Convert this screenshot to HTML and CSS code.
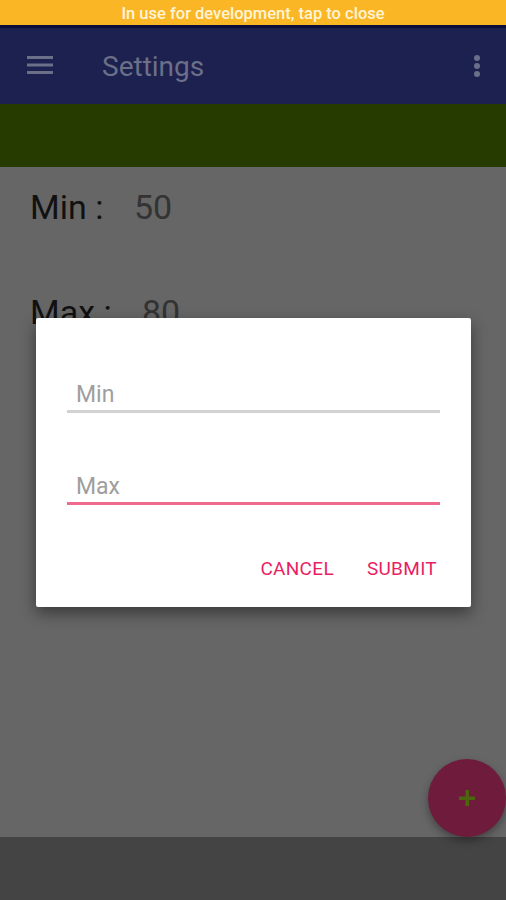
FILE: index.html
```html
<!DOCTYPE html>
<html>
<head>
<meta charset="utf-8">
<link rel="stylesheet" href="styles.css">
</head>
<body>
<div class="screen">
  <div class="status">In use for development, tap to close</div>
  <div class="appbar">
    <svg class="menu" width="26" height="20" viewBox="0 0 26 20"><rect x="0" y="1" width="26" height="3"/><rect x="0" y="8.5" width="26" height="3"/><rect x="0" y="16" width="26" height="3"/></svg>
    <div class="title">Settings</div>
    <svg class="kebab" width="8" height="22" viewBox="0 0 8 22"><circle cx="4" cy="3" r="3"/><circle cx="4" cy="11" r="3"/><circle cx="4" cy="19" r="3"/></svg>
  </div>
  <div class="band"></div>
  <div class="content">
    <div class="row"><span class="label">Min :</span><span class="value">50</span></div>
    <div class="row row-max"><span class="label">Max :</span><span class="value">80</span></div>
    <div class="fab">
      <svg width="18" height="18" viewBox="0 0 18 18"><rect x="7.5" y="1" width="3.5" height="16"/><rect x="1" y="7.5" width="16" height="3.5"/></svg>
    </div>
  </div>
  <div class="navbar"></div>

  <div class="dialog">
    <div class="field"><span class="ph">Min</span></div>
    <div class="field focused"><span class="ph">Max</span></div>
    <div class="actions">
      <span class="btn">CANCEL</span>
      <span class="btn">SUBMIT</span>
    </div>
  </div>
</div>
</body>
</html>
```
FILE: styles.css
```css
html, body {
  margin: 0;
  padding: 0;
}
body {
  font-family: Roboto, "Noto Sans", sans-serif;
}
.screen {
  position: relative;
  width: 506px;
  height: 900px;
  display: flex;
  flex-direction: column;
  overflow: hidden;
  background: #666666;
}
.status {
  height: 25px;
  background: #fbb626;
  color: #fff4d6;
  font-size: 16.5px;
  font-weight: 500;
  line-height: 28px;
  text-align: center;
  border-bottom: 3px solid #0c0f3a;
}
.appbar {
  height: 76px;
  background: #1c2150;
  display: flex;
  align-items: center;
  padding: 0 27px;
}
.menu {
  fill: #6b6f87;
  margin-top: -2px;
}
.title {
  color: #6b6f87;
  font-size: 28px;
  margin-left: 49px;
  flex: 1;
}
.kebab {
  fill: #6b6f87;
  margin-right: -2px;
  margin-top: -1px;
}
.band {
  height: 63px;
  background: #263b00;
}
.content {
  flex: 1;
  background: #666666;
  padding: 20px 0 0 30px;
  position: relative;
}
.row {
  height: 105px;
  font-size: 34px;
  line-height: 40px;
  color: #111;
}
.label {
  display: inline-block;
  width: 104px;
}
.row-max .label {
  width: 112px;
}
.value {
  color: #333;
}
.fab {
  position: absolute;
  left: 428px;
  top: 592px;
  width: 78px;
  height: 78px;
  border-radius: 50%;
  background: #6e1b3c;
  box-shadow: 0 4px 8px rgba(0,0,0,0.35);
  display: flex;
  align-items: center;
  justify-content: center;
}
.fab svg {
  fill: #4c6610;
}
.navbar {
  height: 63px;
  background: #444444;
}
.dialog {
  position: absolute;
  left: 36px;
  top: 318px;
  width: 435px;
  height: 289px;
  background: #ffffff;
  border-radius: 2px;
  box-shadow: 0 6px 16px rgba(0,0,0,0.45);
  box-sizing: border-box;
  padding: 52px 31px 0 31px;
}
.field {
  height: 40px;
  padding-top: 11px;
  padding-left: 9px;
  box-sizing: content-box;
  height: 29px;
  border-bottom: 3px solid #d2d2d2;
  margin-bottom: 49px;
}
.field.focused {
  border-bottom-color: #f06a8e;
  margin-bottom: 0;
}
.ph {
  display: block;
  font-size: 23px;
  line-height: 28px;
  color: #9e9e9e;
}
.actions {
  display: flex;
  justify-content: flex-end;
  gap: 33px;
  margin-top: 52px;
  padding-right: 3px;
}
.btn {
  color: #e91e63;
  font-size: 19px;
  letter-spacing: 0.3px;
  line-height: 24px;
}
```
